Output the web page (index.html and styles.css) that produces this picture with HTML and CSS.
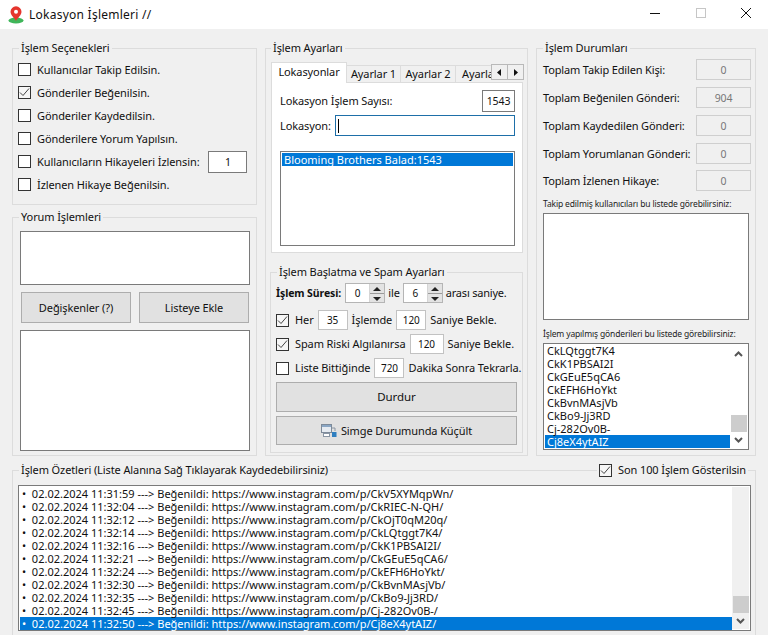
FILE: index.html
```html
<!DOCTYPE html>
<html lang="tr">
<head>
<meta charset="utf-8">
<title>Lokasyon İşlemleri //</title>
<link rel="stylesheet" href="styles.css">
</head>
<body>
<div class="window">
  <header class="titlebar">
    <svg class="app-icon" width="16" height="18" viewBox="0 0 16 18"><ellipse cx="8" cy="14.5" rx="7.5" ry="3" fill="#3fb65a"/><path d="M8 15C6.5 12 2.500 9.500 2.500 5.800a5.500 5.500 0 0 1 11 0C13.500 9.500 9.500 12 8 15z" fill="#e5352d"/><circle cx="8" cy="5.800" r="2" fill="#fff"/></svg>
    <span class="title-text">Lokasyon İşlemleri //</span>
    <div class="caption">
      <svg class="cap cap-min" width="10" height="1" viewBox="0 0 10 1"><path d="M0 .5h10" stroke="#111"/></svg>
      <svg class="cap cap-max" width="10" height="10" viewBox="0 0 10 10"><rect x=".5" y=".5" width="9" height="9" fill="none" stroke="#c6c6c6"/></svg>
      <svg class="cap cap-close" width="10" height="10" viewBox="0 0 10 10"><path d="M0 0l10 10M10 0L0 10" stroke="#111"/></svg>
    </div>
  </header>

  <main class="content">
    <div class="columns">
      <div class="col-left">
        <fieldset class="group g-options">
          <legend>İşlem Seçenekleri</legend>
          <label class="check-row"><span class="cb"></span>Kullanıcılar Takip Edilsin.</label>
          <label class="check-row"><span class="cb on"><svg width="11" height="11" viewBox="0 0 11 11"><path d="M1 5.500l3 3 6-7" fill="none" stroke="#444" stroke-width="1"/></svg></span>Gönderiler Beğenilsin.</label>
          <label class="check-row"><span class="cb"></span>Gönderiler Kaydedilsin.</label>
          <label class="check-row"><span class="cb"></span>Gönderilere Yorum Yapılsın.</label>
          <label class="check-row"><span class="cb"></span>Kullanıcıların Hikayeleri İzlensin:<span class="num num-story">1</span></label>
          <label class="check-row"><span class="cb"></span>İzlenen Hikaye Beğenilsin.</label>
        </fieldset>
        <fieldset class="group g-comment">
          <legend>Yorum İşlemleri</legend>
          <div class="box comment-input"></div>
          <div class="btn-pair">
            <button class="btn btn-half">Değişkenler (?)</button>
            <button class="btn btn-half">Listeye Ekle</button>
          </div>
          <div class="box comment-list"></div>
        </fieldset>
      </div>

      <fieldset class="group g-settings">
        <legend>İşlem Ayarları</legend>
        <div class="tabs">
          <div class="tab active">Lokasyonlar</div>
          <div class="tab t1">Ayarlar 1</div>
          <div class="tab t2">Ayarlar 2</div>
          <div class="tab t3"><span class="clip">Ayarlar 3</span></div>
          <div class="tab-arrows">
            <span class="arrow"><svg width="5" height="7" viewBox="0 0 5 7"><path d="M4 0v7L0 3.500z" fill="#111"/></svg></span>
            <span class="arrow"><svg width="5" height="7" viewBox="0 0 5 7"><path d="M1 0v7l4-3.500z" fill="#111"/></svg></span>
          </div>
        </div>
        <div class="tab-panel">
          <div class="loc-row loc-count"><span>Lokasyon İşlem Sayısı:</span><span class="num num-count">1543</span></div>
          <div class="loc-row loc-name"><span>Lokasyon:</span><span class="focus-input"><i class="caret"></i></span></div>
          <div class="box loc-list"><div class="sel">Blooming Brothers Balad:1543</div></div>
        </div>
        <fieldset class="group g-spam">
          <legend>İşlem Başlatma ve Spam Ayarları</legend>
          <div class="spam-row row-time">
            <b class="strong">İşlem Süresi:</b>
            <span class="spin"><span class="spin-val">0</span><span class="spin-btns"><span class="up"></span><span class="down"></span></span></span>
            <span>ile</span>
            <span class="spin"><span class="spin-val">6</span><span class="spin-btns"><span class="up"></span><span class="down"></span></span></span>
            <span class="tight">arası saniye.</span>
          </div>
          <div class="spam-row row-her">
            <span class="cb on"><svg width="11" height="11" viewBox="0 0 11 11"><path d="M1 5.500l3 3 6-7" fill="none" stroke="#444"/></svg></span>
            <span>Her</span><span class="num w30">35</span><span>İşlemde</span><span class="num w30">120</span><span>Saniye Bekle.</span>
          </div>
          <div class="spam-row row-risk">
            <span class="cb on"><svg width="11" height="11" viewBox="0 0 11 11"><path d="M1 5.500l3 3 6-7" fill="none" stroke="#444"/></svg></span>
            <span>Spam Riski Algılanırsa</span><span class="num w34">120</span><span>Saniye Bekle.</span>
          </div>
          <div class="spam-row row-list">
            <span class="cb"></span>
            <span>Liste Bittiğinde</span><span class="num w30">720</span><span>Dakika Sonra Tekrarla.</span>
          </div>
          <button class="btn btn-stop">Durdur</button>
          <button class="btn btn-min">
            <svg width="16" height="14" viewBox="0 0 16 14"><rect x=".5" y=".5" width="10" height="8" fill="#e6ebf1" stroke="#7d8a99"/><rect x="1" y="1" width="9" height="2" fill="#8aa6c4"/><rect x="2.500" y="9.500" width="6" height="3" fill="#fff" stroke="#8a96a4"/><rect x="11" y="8" width="4.500" height="5" fill="#2f7fc0"/><path d="M11 4h3v3" fill="none" stroke="#8a96a4"/></svg>
            Simge Durumunda Küçült
          </button>
        </fieldset>
      </fieldset>

      <fieldset class="group g-status">
        <legend>İşlem Durumları</legend>
        <div class="stat"><span>Toplam Takip Edilen Kişi:</span><span class="stat-val">0</span></div>
        <div class="stat"><span>Toplam Beğenilen Gönderi:</span><span class="stat-val">904</span></div>
        <div class="stat"><span>Toplam Kaydedilen Gönderi:</span><span class="stat-val">0</span></div>
        <div class="stat"><span>Toplam Yorumlanan Gönderi:</span><span class="stat-val">0</span></div>
        <div class="stat s-last"><span>Toplam İzlenen Hikaye:</span><span class="stat-val">0</span></div>
        <div class="small-label">Takip edilmiş kullanıcıları bu listede görebilirsiniz:</div>
        <div class="box follow-list"></div>
        <div class="small-label sl2">İşlem yapılmış gönderileri bu listede görebilirsiniz:</div>
        <div class="box post-list">
          <div class="rows">
            <div class="lrow">CkLQtggt7K4</div>
            <div class="lrow">CkK1PBSAI2I</div>
            <div class="lrow">CkGEuE5qCA6</div>
            <div class="lrow">CkEFH6HoYkt</div>
            <div class="lrow">CkBvnMAsjVb</div>
            <div class="lrow">CkBo9-Jj3RD</div>
            <div class="lrow">Cj-282Ov0B-</div>
            <div class="lrow sel">Cj8eX4ytAIZ</div>
          </div>
          <div class="scrollbar sb-post">
            <svg width="9" height="6" viewBox="0 0 9 6"><path d="M1 5l3.500-3.500L8 5" fill="none" stroke="#555" stroke-width="2"/></svg>
            <span class="thumb"></span>
            <svg width="9" height="6" viewBox="0 0 9 6"><path d="M1 1l3.500 3.500L8 1" fill="none" stroke="#555" stroke-width="2"/></svg>
          </div>
        </div>
      </fieldset>
    </div>

    <fieldset class="group g-log">
      <legend>İşlem Özetleri (Liste Alanına Sağ Tıklayarak Kaydedebilirsiniz)</legend>
      <label class="last100"><span class="cb on"><svg width="11" height="11" viewBox="0 0 11 11"><path d="M1 5.500l3 3 6-7" fill="none" stroke="#444"/></svg></span>Son 100 İşlem Gösterilsin</label>
      <div class="box log-list">
        <div class="rows">
          <div class="lrow">•&nbsp; 02.02.2024 11:31:59 ---&gt; Beğenildi: https://www.instagram.com/p/CkV5XYMqpWn/</div>
          <div class="lrow">•&nbsp; 02.02.2024 11:32:04 ---&gt; Beğenildi: https://www.instagram.com/p/CkRIEC-N-QH/</div>
          <div class="lrow">•&nbsp; 02.02.2024 11:32:12 ---&gt; Beğenildi: https://www.instagram.com/p/CkOjT0qM20q/</div>
          <div class="lrow">•&nbsp; 02.02.2024 11:32:14 ---&gt; Beğenildi: https://www.instagram.com/p/CkLQtggt7K4/</div>
          <div class="lrow">•&nbsp; 02.02.2024 11:32:16 ---&gt; Beğenildi: https://www.instagram.com/p/CkK1PBSAI2I/</div>
          <div class="lrow">•&nbsp; 02.02.2024 11:32:21 ---&gt; Beğenildi: https://www.instagram.com/p/CkGEuE5qCA6/</div>
          <div class="lrow">•&nbsp; 02.02.2024 11:32:24 ---&gt; Beğenildi: https://www.instagram.com/p/CkEFH6HoYkt/</div>
          <div class="lrow">•&nbsp; 02.02.2024 11:32:30 ---&gt; Beğenildi: https://www.instagram.com/p/CkBvnMAsjVb/</div>
          <div class="lrow">•&nbsp; 02.02.2024 11:32:35 ---&gt; Beğenildi: https://www.instagram.com/p/CkBo9-Jj3RD/</div>
          <div class="lrow">•&nbsp; 02.02.2024 11:32:45 ---&gt; Beğenildi: https://www.instagram.com/p/Cj-282Ov0B-/</div>
          <div class="lrow sel">•&nbsp; 02.02.2024 11:32:50 ---&gt; Beğenildi: https://www.instagram.com/p/Cj8eX4ytAIZ/</div>
        </div>
        <div class="scrollbar sb-log">
          <span class="thumb"></span>
          <svg width="9" height="6" viewBox="0 0 9 6"><path d="M1 1l3.500 3.500L8 1" fill="none" stroke="#555" stroke-width="2"/></svg>
        </div>
      </div>
    </fieldset>
  </main>
</div>
</body>
</html>
```

FILE: styles.css
```css
* { box-sizing: border-box; }
html, body { margin: 0; padding: 0; }
body {
  width: 768px; height: 635px; overflow: hidden;
  background: #f0f0f0; color: #111;
  font: 11px/14px "Noto Sans", "Open Sans", sans-serif;
  letter-spacing: -.1px;
}
.window { display: flex; flex-direction: column; height: 635px; }

.titlebar { height: 29px; background: #fff; display: flex; align-items: center; padding-left: 8px; flex: none; }
.app-icon { margin-right: 5px; }
.title-text { font-size: 12px; letter-spacing: .25px; }
.caption { margin-left: auto; display: flex; align-items: center; padding-right: 17px; margin-top: -3px; }
.cap-min { margin-right: 36px; }
.cap-max { margin-right: 35px; }

.content { padding: 12px 12px 0 12px; flex: 1; display: flex; flex-direction: column; }
.columns { display: flex; gap: 8px; height: 415px; flex: none; }
.col-left { width: 245px; display: flex; flex-direction: column; gap: 5px; }

.group { margin: 0; min-width: 0; border: 1px solid #dcdcdc; padding: 0; position: relative; }
.group > legend { padding: 0 2px; font-size: 11px; line-height: 14px; white-space: nowrap; }

.g-options { height: 164px; padding: 0 5px; }
.g-options > legend { margin-left: 1px; }
.check-row { display: flex; align-items: center; height: 23px; white-space: nowrap; }
.g-options > .check-row:first-of-type { margin-top: 3px; }
.cb { width: 13px; height: 13px; border: 1px solid #333; background: #fff; display: inline-flex; align-items: center; justify-content: center; margin-right: 6px; flex: none; }
.cb.on { background: #f6f6f6; }
.num { display: inline-flex; align-items: center; justify-content: center; background: #fff; border: 1px solid #7a7a7a; height: 20px; font-size: 10.5px; flex: none; }
.num-story { width: 39px; height: 22px; margin-left: 9px; }

.g-comment { height: 246px; padding: 0 6px 0 7px; }
.g-comment > legend { margin-left: -1px; }
.box { background: #fff; border: 1px solid #7a7a7a; }
.comment-input { width: 230px; height: 54px; margin-top: 7px; }
.btn-pair { display: flex; gap: 8px; margin: 7px 0 7px 1px; }
.btn { background: #e1e1e1; border: 1px solid #adadad; font: inherit; letter-spacing: inherit; color: #111; padding: 0; display: flex; align-items: center; justify-content: center; }
.btn-half { width: 110px; height: 31px; }
.comment-list { width: 230px; height: 121px; }

.g-settings { width: 263px; padding: 0 4px 0 5px; }
.tabs { display: flex; height: 20px; margin-top: 7px; position: relative; align-items: flex-end; }
.tab { height: 17px; background: #f0f0f0; border: 1px solid #dcdcdc; border-bottom: 0; margin-left: -1px; display: flex; align-items: center; justify-content: center; white-space: nowrap; }
.tab.active { height: 21px; width: 76px; background: #fff; margin-left: 0; position: relative; z-index: 1; margin-bottom: -1px; padding-bottom: 2px; }
.t1 { width: 55px; }
.t2 { width: 56px; }
.t3 { width: 37px; overflow: hidden; justify-content: flex-start; padding-left: 6px; border-right: 0; }
.clip { display: block; }
.tab-arrows { display: flex; position: absolute; right: -1px; top: 2px; z-index: 2; }
.arrow { width: 17px; height: 16px; background: #f0f0f0; border: 1px solid #b9b9b9; display: flex; align-items: center; justify-content: center; margin-left: -1px; }
.tab-panel { width: 252px; height: 171px; background: #fff; border: 1px solid #dcdcdc; padding: 7px 7px 0 8px; }
.loc-row { display: flex; align-items: center; justify-content: space-between; }
.loc-count { height: 22px; }
.num-count { width: 33px; height: 22px; }
.loc-name { height: 21px; margin-top: 3px; }
.focus-input { width: 180px; height: 21px; border: 1px solid #1e6fa8; display: flex; align-items: center; padding-left: 2px; }
.caret { width: 1px; height: 14px; background: #000; }
.loc-list { height: 95px; margin-top: 15px; padding: 1px; }
.sel { background: #0078d7; color: #fff; }
.loc-list .sel { height: 13px; line-height: 13px; padding-left: 2px; letter-spacing: 0; }

.g-spam { width: 253px; height: 188px; margin: 12px 0 0 -1px; padding: 0 5px; }
.g-spam > legend { margin-left: 1px; }
.spam-row { display: flex; align-items: center; white-space: nowrap; }
.row-time { height: 20px; margin-top: 4px; gap: 3px; }
.strong { font-size: 10.5px; margin-right: 1px; }
.tight { letter-spacing: -.2px; }
.spin { width: 40px; height: 20px; background: #fff; border: 1px solid #b5b5b5; display: flex; }
.spin-val { flex: 1; text-align: center; font-size: 10px; line-height: 18px; }
.spin-btns { width: 15px; display: flex; flex-direction: column; background: #e3e3e3; border-left: 1px solid #d5d5d5; }
.up, .down { flex: 1; position: relative; }
.up { border-bottom: 1px solid #9a9a9a; }
.up::after, .down::after { content: ""; position: absolute; left: 3px; width: 0; height: 0; border-left: 4px solid transparent; border-right: 4px solid transparent; }
.up::after { top: 3px; border-bottom: 4px solid #222; }
.down::after { top: 3px; border-top: 4px solid #222; }
.row-her { height: 20px; margin-top: 7px; gap: 4px; }
.row-risk { height: 20px; margin-top: 4px; gap: 4px; }
.row-list { height: 20px; margin-top: 4px; gap: 4px; }
.row-her .cb, .row-risk .cb, .row-list .cb { margin-right: 2px; }
.w30 { width: 30px; height: 20px; border-color: #c2c2c2; font-size: 10px; }
.w34 { width: 34px; height: 20px; border-color: #c2c2c2; font-size: 10px; }
.btn-stop { width: 241px; height: 30px; margin-top: 4px; font-size: 11.5px; }
.btn-min { width: 241px; height: 29px; margin-top: 4px; gap: 4px; }

.g-status { width: 220px; padding: 0 4px 0 6px; }
.stat { display: flex; align-items: center; justify-content: space-between; height: 21px; margin-bottom: 7px; white-space: nowrap; letter-spacing: -.15px; }
.g-status > .stat:first-of-type { margin-top: 4px; }
.g-status > .s-last { margin-bottom: 0; margin-top: -1px; }
.stat-val { width: 55px; height: 21px; border: 1px solid #cfcfcf; display: flex; align-items: center; justify-content: center; color: #777; font-size: 10.500px; flex: none; }
.small-label { font-size: 8.5px; letter-spacing: -.15px; line-height: 12px; margin-top: 7px; white-space: nowrap; color: #222; }
.follow-list { width: 206px; height: 107px; margin-top: 3px; }
.g-status > .sl2 { margin-top: 8px; }
.post-list { width: 206px; height: 107px; margin-top: 3px; display: flex; padding: 0 1px; }
.rows { flex: 1; min-width: 0; }
.lrow { height: 13px; line-height: 13px; padding-left: 2px; white-space: nowrap; letter-spacing: 0; }
.scrollbar { width: 17px; background: #f0f0f0; display: flex; flex-direction: column; align-items: center; position: relative; }
.sb-post { background: #fff; justify-content: flex-end; padding-bottom: 6px; }
.sb-post svg:first-child { position: absolute; top: 7px; left: 4px; }
.thumb { width: 16px; height: 17px; background: #cdcdcd; flex: none; }
.sb-post .thumb { margin-bottom: 5px; }

.g-log { margin-top: 7px; padding: 0 5px; height: 180px; flex: none; }
.g-log > legend { margin-left: 1px; }
.last100 { position: absolute; top: -14px; right: 7px; display: flex; align-items: center; background: #f0f0f0; padding: 0 2px; height: 14px; white-space: nowrap; }
.log-list { width: 733px; height: 146px; margin-top: 8px; display: flex; padding: 1px; }
.sb-log { justify-content: flex-end; padding-bottom: 5px; width: 17px; }
.sb-log .thumb { margin-bottom: 5px; }
```
